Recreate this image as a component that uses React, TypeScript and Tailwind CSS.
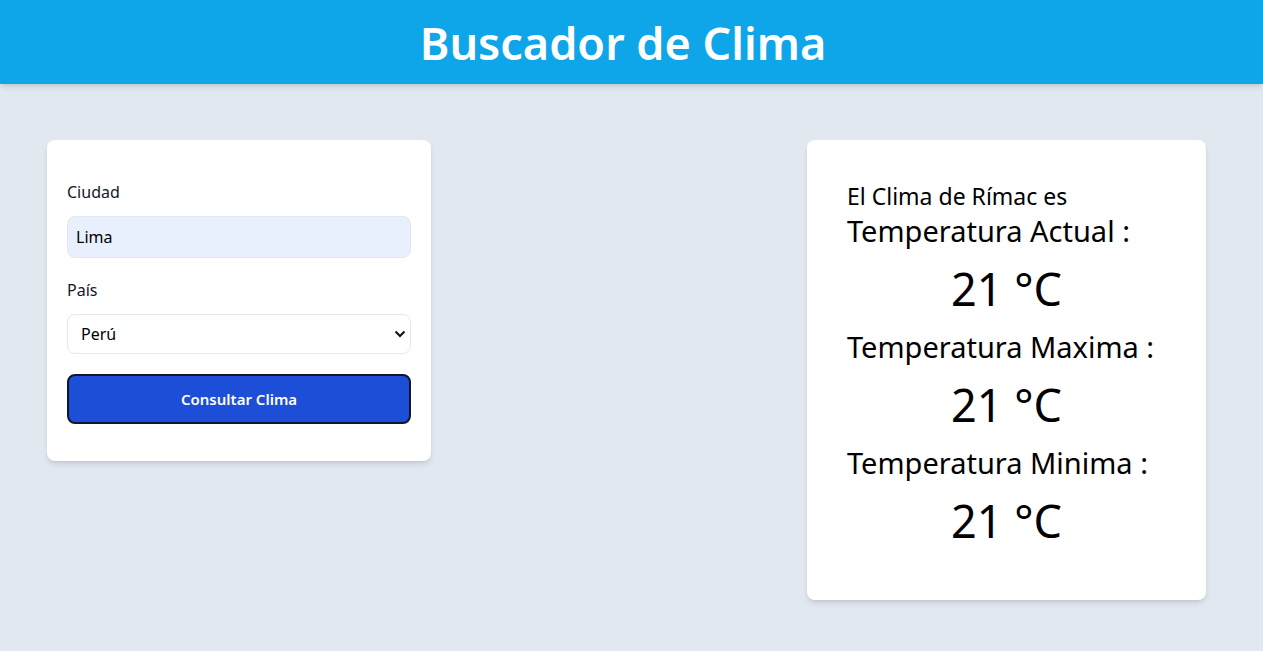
import React from "react";

export default function App() {
  return (
    <div
      className="min-h-[651px] bg-[#e2e8f0]"
      style={{ fontFamily: '"Noto Sans", "Open Sans", sans-serif' }}
    >
      <header className="h-[84px] bg-[#0ea5e9] shadow-md flex items-center justify-center pr-[17px]">
        <h1 className="text-white text-[45px] font-semibold leading-none">Buscador de Clima</h1>
      </header>

      <main className="flex justify-between items-start pt-14 pl-[47px] pr-[57px]">
        <div className="w-96 bg-white rounded-lg shadow-md px-5 pt-10 pb-[37px]">
          <form onSubmit={(e) => e.preventDefault()}>
            <label className="block text-base text-gray-900 leading-6 mb-3">Ciudad</label>
            <input
              type="text"
              defaultValue="Lima"
              className="block w-full bg-[#e8f0fe] border border-gray-200 rounded-lg p-2 text-base leading-6 text-black outline-none"
            />
            <label className="block text-base text-gray-900 leading-6 mt-5 mb-3">País</label>
            <div className="relative">
              <select
                defaultValue="PE"
                className="block w-full appearance-none bg-white border border-gray-200 rounded-lg pl-[13px] pr-8 py-2 text-base leading-[22px] text-black outline-none"
              >
                <option value="PE">Perú</option>
              </select>
              <svg
                className="absolute right-[5px] top-1/2 -translate-y-1/2 pointer-events-none"
                width="12"
                height="8"
                viewBox="0 0 12 8"
              >
                <path d="M1.5 1.5 L6 6 L10.5 1.5" fill="none" stroke="#111" strokeWidth="2" />
              </svg>
            </div>
            <button
              type="submit"
              className="mt-5 w-full bg-[#1d4ed8] text-white font-semibold text-[15px] leading-6 py-[11px] rounded-lg border-2 border-gray-900"
            >
              Consultar Clima
            </button>
          </form>
        </div>

        <div className="w-[399px] bg-white rounded-lg shadow-md px-10 pt-10 pb-[57px] text-black">
          <p className="text-[23px] leading-[33px]">El Clima de Rímac es</p>
          <p className="text-[29px] leading-9">Temperatura Actual :</p>
          <p className="text-[45px] leading-none text-center mt-[17px] mb-[18px]">21 °C</p>
          <p className="text-[29px] leading-9">Temperatura Maxima :</p>
          <p className="text-[45px] leading-none text-center mt-[17px] mb-[18px]">21 °C</p>
          <p className="text-[29px] leading-9">Temperatura Minima :</p>
          <p className="text-[45px] leading-none text-center mt-[17px]">21 °C</p>
        </div>
      </main>
    </div>
  );
}
